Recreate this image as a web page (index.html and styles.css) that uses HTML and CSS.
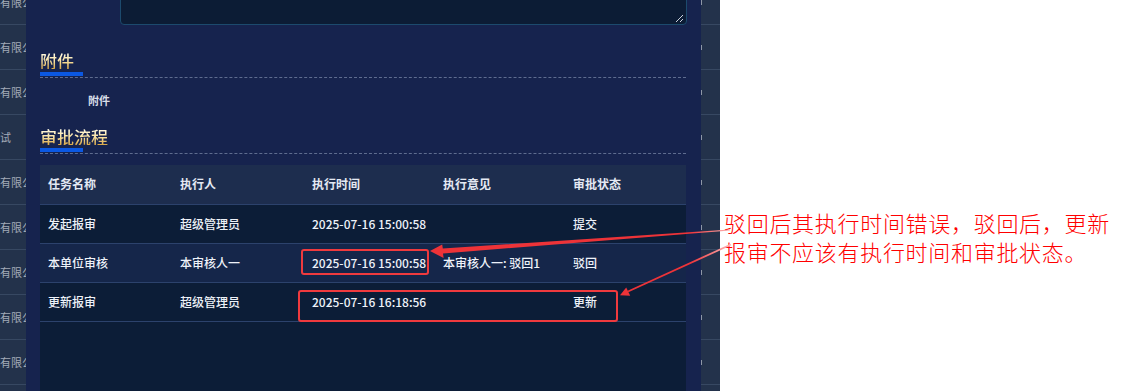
FILE: index.html
```html
<!DOCTYPE html>
<html lang="zh-CN">
<head>
    <meta charset="UTF-8">
    <meta name="viewport" content="width=device-width, initial-scale=1.0">
    <title>审批流程</title>
    <link rel="stylesheet" href="styles.css">
</head>
<body>

    <div class="shot">
        <div class="page">

            <!-- list behind the dialog, left edge -->
            <div class="back-list">
                <div class="back-row">有限公司</div>
                <div class="back-row">有限公司</div>
                <div class="back-row">有限公司</div>
                <div class="back-row">试</div>
                <div class="back-row">有限公司</div>
                <div class="back-row">有限公司</div>
                <div class="back-row">有限公司</div>
                <div class="back-row">有限公司</div>
                <div class="back-row">有限公司</div>
            </div>

            <!-- dialog -->
            <div class="modal">
                <div class="area-wrap">
                    <textarea class="area" readonly></textarea>
                    <svg class="grip" width="9" height="9" viewBox="0 0 9 9">
                        <path d="M1 8 L8 1 M5 8 L8 5" stroke="#c9d0dc" stroke-width="1"/>
                    </svg>
                </div>

                <div class="sec-head">
                    <div class="sec-title">附件</div>
                </div>
                <div class="file-label">附件</div>

                <div class="sec-head">
                    <div class="sec-title">审批流程</div>
                </div>

                <div class="flow">
                    <div class="flow-row head">
                        <div>任务名称</div>
                        <div>执行人</div>
                        <div>执行时间</div>
                        <div>执行意见</div>
                        <div>审批状态</div>
                    </div>
                    <div class="flow-row">
                        <div>发起报审</div>
                        <div>超级管理员</div>
                        <div>2025-07-16 15:00:58</div>
                        <div></div>
                        <div>提交</div>
                    </div>
                    <div class="flow-row stripe">
                        <div>本单位审核</div>
                        <div>本审核人一</div>
                        <div>2025-07-16 15:00:58</div>
                        <div>本审核人一: 驳回1</div>
                        <div>驳回</div>
                    </div>
                    <div class="flow-row">
                        <div>更新报审</div>
                        <div>超级管理员</div>
                        <div>2025-07-16 16:18:56</div>
                        <div></div>
                        <div>更新</div>
                    </div>
                </div>
            </div>

            <!-- list behind the dialog, right edge -->
            <div class="back-list right">
                <div class="back-row"><span class="tick"></span></div>
                <div class="back-row"><span class="tick"></span></div>
                <div class="back-row"><span class="tick"></span></div>
                <div class="back-row"><span class="tick"></span></div>
                <div class="back-row"><span class="tick"></span></div>
                <div class="back-row"><span class="tick"></span></div>
                <div class="back-row"><span class="tick"></span></div>
                <div class="back-row"><span class="tick"></span></div>
                <div class="back-row"><span class="tick"></span></div>
            </div>
        </div>

        <!-- annotation -->
        <div class="note">
            驳回后其执行时间错误，驳回后，更新<br>
            报审不应该有执行时间和审批状态。
        </div>

        <!-- red marks drawn over the screenshot -->
        <svg class="marks" width="1148" height="391" viewBox="0 0 1148 391">
            <defs>
                <linearGradient id="fade" gradientUnits="userSpaceOnUse" x1="690" y1="0" x2="735" y2="0">
                    <stop offset="0" stop-color="#ee3338"/>
                    <stop offset="1" stop-color="#ffc4c4"/>
                </linearGradient>
            </defs>
            <rect x="302" y="250" width="126" height="24" rx="2" fill="none" stroke="#f03a3e" stroke-width="2"/>
            <rect x="299" y="291" width="318" height="30" rx="2" fill="none" stroke="#f03a3e" stroke-width="2"/>
            <polygon points="730,229.4 730,230.6 443,253.4 443.6,258 430,251 442.2,244.4 442.8,248.6" fill="url(#fade)"/>
            <path d="M731 244.5 L628 291.5" stroke="url(#fade)" stroke-width="1.8" fill="none"/>
            <polygon points="620,295.2 626.2,287.4 630.2,295.8" fill="#ee3338"/>
        </svg>
    </div>

</body>
</html>
```

FILE: styles.css
```css
/* Base */
body {
    margin: 0;
    background-color: #ffffff;
    font-family: "Liberation Sans", "Noto Sans CJK SC", sans-serif;
    overflow: hidden;
}

.shot {
    position: relative;
    width: 1148px;
    height: 391px;
    display: flex;
}

.page {
    width: 720px;
    height: 391px;
    display: flex;
    overflow: hidden;
    flex-shrink: 0;
}

/* Rows of the list that sits behind the dialog */
.back-list {
    width: 26px;
    background-color: #23324b;
    overflow: hidden;
    flex-shrink: 0;
}

.back-list.right {
    width: 19px;
}

.back-row {
    height: 44px;
    border-bottom: 1px solid #374862;
    display: flex;
    align-items: center;
    white-space: nowrap;
    font-size: 11px;
    color: #a3abb8;
    font-family: "Noto Sans CJK SC", sans-serif;
}

.back-row:first-child {
    margin-top: -20px;
}

.tick {
    width: 1px;
    height: 5px;
    background-color: #8e97a6;
}

/* Dialog */
.modal {
    width: 675px;
    background-color: #16234e;
    padding: 0 15px 0 14px;
    box-sizing: border-box;
    flex-shrink: 0;
}

.area-wrap {
    position: relative;
    margin-left: 80px;
    margin-right: -1px;
    margin-top: -45px;
}

.area {
    display: block;
    width: 100%;
    height: 70px;
    box-sizing: border-box;
    background-color: #0c1c35;
    border: 1px solid #1c4a6d;
    border-radius: 4px;
    resize: none;
    outline: none;
}

.grip {
    position: absolute;
    right: 3px;
    bottom: 2px;
}

.sec-head {
    margin-top: 28px;
    padding-bottom: 1px;
    border-bottom: 1px dashed #5e6c8f;
}

.sec-head::after {
    content: "";
    display: block;
    width: 43px;
    height: 4px;
    background-color: #0b58e2;
}

.sec-title {
    font-family: "Noto Sans CJK SC", sans-serif;
    font-size: 17px;
    font-weight: 500;
    line-height: 16px;
    background: linear-gradient(180deg, #fffbe6 0%, #fbe3a2 50%, #d7a646 100%);
    -webkit-background-clip: text;
    background-clip: text;
    color: transparent;
    display: inline-block;
}

.file-label {
    margin-top: 12px;
    padding-left: 48px;
    font-size: 11px;
    line-height: 20px;
    font-weight: bold;
    color: #d9dee8;
    font-family: "Noto Sans CJK SC", sans-serif;
}

.file-label + .sec-head {
    margin-top: 19px;
}

/* Approval flow table */
.flow {
    margin-top: 11px;
    height: 260px;
    background-color: #0c1d37;
}

.flow-row {
    display: grid;
    grid-template-columns: 132px 132px 131px 130px 1fr;
    height: 38px;
    border-bottom: 1px solid #2c426c;
    align-items: center;
    font-family: "Noto Sans CJK SC", "Liberation Sans", sans-serif;
    font-size: 12px;
    font-weight: 500;
    color: #eef2f9;
}

.flow-row > div {
    padding-left: 8px;
    white-space: nowrap;
    margin-top: -2px;
}

.flow-row.head {
    height: 39px;
    background-color: #1d2d4e;
    color: #e4e9f3;
    font-weight: bold;
}

.flow-row.stripe {
    background-color: #15264a;
}

/* Annotation */
.note {
    padding: 208px 0 0 4px;
    font-family: "Noto Sans CJK SC", sans-serif;
    font-weight: 300;
    font-size: 22px;
    line-height: 29px;
    letter-spacing: 0.7px;
    color: #ff0000;
    white-space: nowrap;
}

.marks {
    position: absolute;
    left: 0;
    top: 0;
    pointer-events: none;
}
```
